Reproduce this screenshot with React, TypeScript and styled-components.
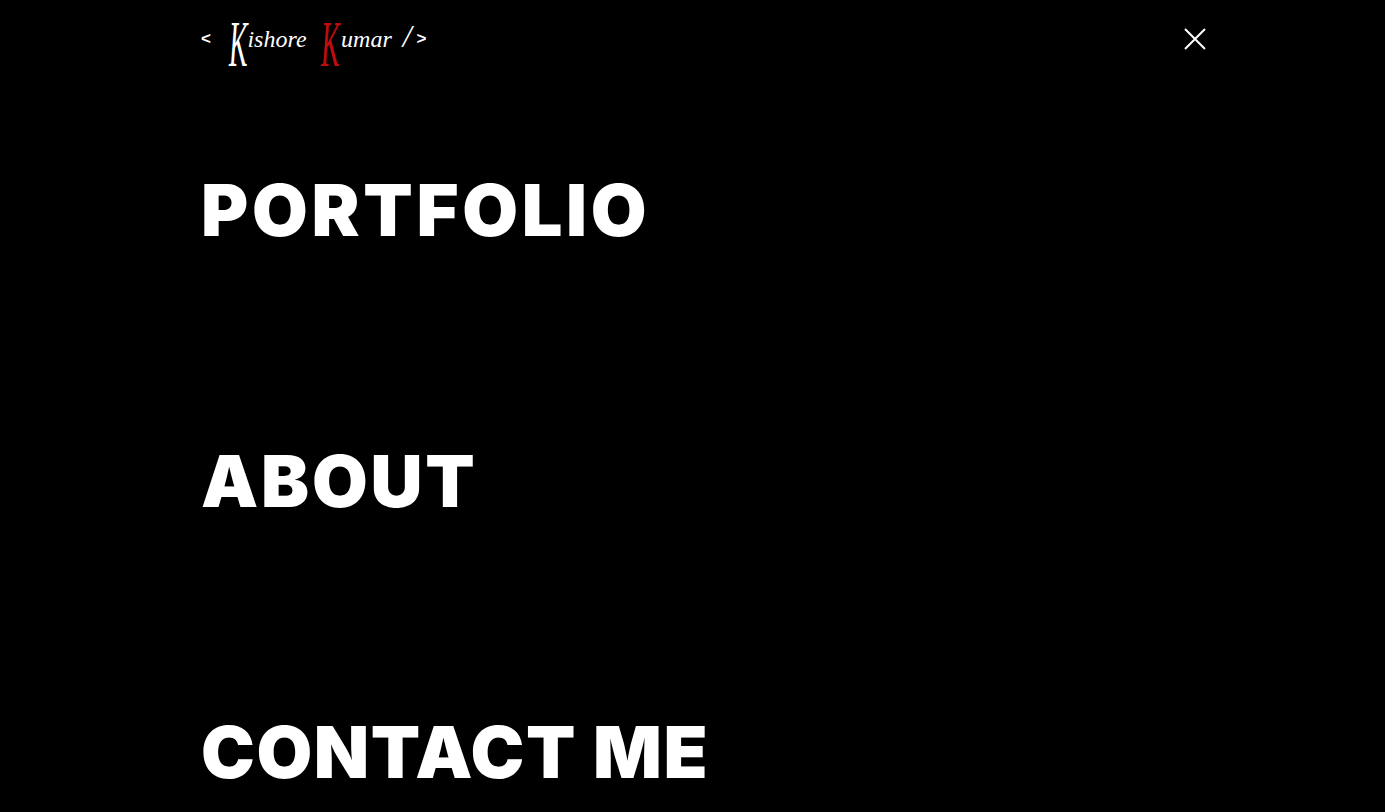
import React from "react";
import styled, { createGlobalStyle } from "styled-components";

const GlobalStyle = createGlobalStyle`
  html, body {
    margin: 0;
    height: 100%;
    background: #000;
    overflow: hidden;
  }
`;

const Page = styled.div`
  height: 812px;
  padding: 0 178px 0 201px;
  background: #000;
  color: #fff;
  overflow: hidden;
`;

const Header = styled.header`
  height: 74px;
  display: flex;
  align-items: center;
  justify-content: space-between;
`;

const Logo = styled.a`
  display: flex;
  align-items: baseline;
  font-family: "Liberation Serif", serif;
  font-style: italic;
  font-size: 24px;
  line-height: 1;
  color: #fff;
  position: relative;
  top: -1px;
`;

const Bracket = styled.span`
  font-family: "Liberation Sans", sans-serif;
  font-style: normal;
  font-weight: 700;
  font-size: 17px;
  transform: translateY(-3px);
`;

const Word = styled.span``;

// tall narrow capitals, like the brush lettering of the logo
const Initial = styled.span<{ $red?: boolean }>`
  display: inline-block;
  font-size: 66px;
  width: 18.5px;
  margin: ${(p) => (p.$red ? "0 1.5px 0 14.5px" : "0 0 0 18px")};
  line-height: 0;
  color: ${(p) => (p.$red ? "#c00d0d" : "#fff")};
  transform: translateY(19px) scaleX(0.42);
  transform-origin: left center;
`;

const Slash = styled.span`
  font-size: 32px;
  margin: 0 5px 0 11px;
`;

const CloseButton = styled.button`
  display: flex;
  width: 24px;
  height: 24px;
  margin-top: 4px;
  padding: 0;
  border: 0;
  background: none;
  color: #fff;
`;

const Menu = styled.nav`
  display: grid;
  grid-auto-rows: 271px;
  align-items: center;
`;

const MenuItem = styled.a<{ $tracking: number }>`
  font-family: Inter, "Liberation Sans", sans-serif;
  font-weight: 900;
  font-size: 72px;
  line-height: 1;
  letter-spacing: ${(p) => p.$tracking}px;
  color: #fff;
`;

export default function App() {
  return (
    <Page>
      <GlobalStyle />
      <Header>
        <Logo>
          <Bracket>&lt;</Bracket>
          <Initial>K</Initial>
          <Word>ishore</Word>
          <Initial $red>K</Initial>
          <Word>umar</Word>
          <Slash>/</Slash>
          <Bracket>&gt;</Bracket>
        </Logo>
        <CloseButton aria-label="Close">
          <svg width="24" height="24" viewBox="0 0 24 24" fill="none" stroke="currentColor" strokeWidth="2">
            <path d="M2 2 L22 22 M22 2 L2 22" />
          </svg>
        </CloseButton>
      </Header>
      <Menu>
        <MenuItem $tracking={3.7}>PORTFOLIO</MenuItem>
        <MenuItem $tracking={2.8}>ABOUT</MenuItem>
        <MenuItem $tracking={1.6}>CONTACT ME</MenuItem>
      </Menu>
    </Page>
  );
}
